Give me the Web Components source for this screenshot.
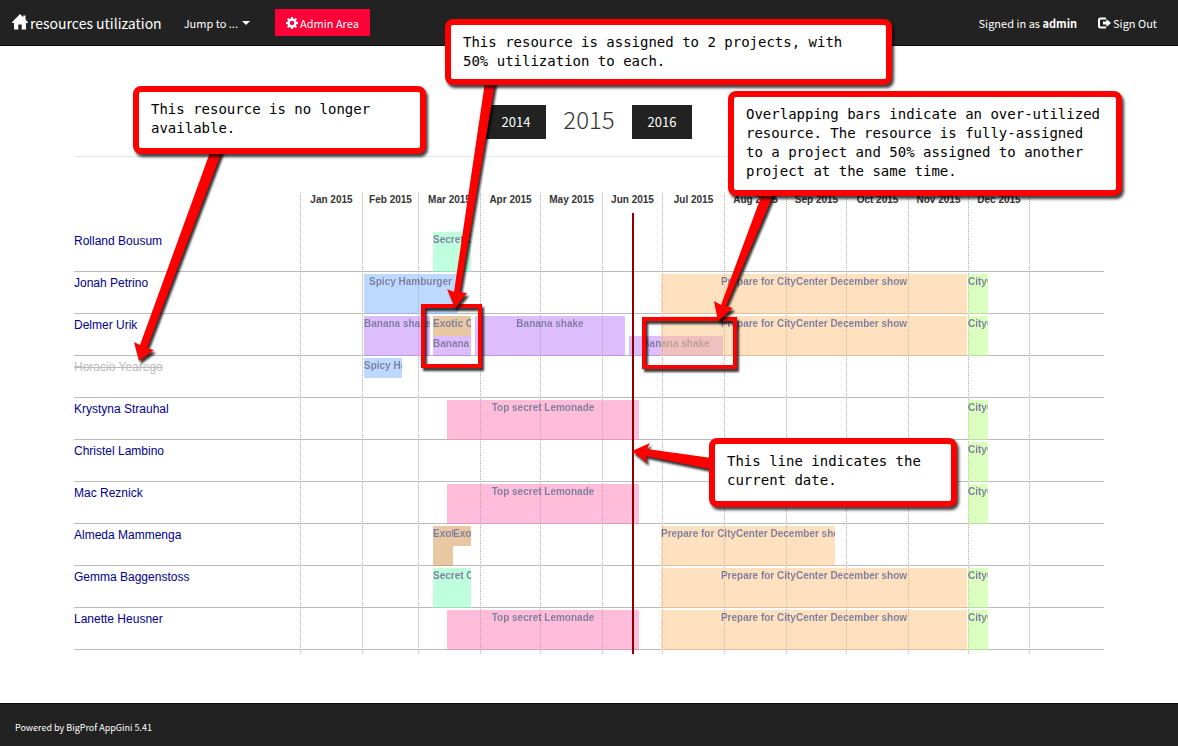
<!DOCTYPE html>
<html lang="en">
<head>
<meta charset="utf-8">
<title>resources utilization</title>
<style>
  body {
    margin: 0;
    min-height: 100vh;
    display: flex;
    flex-direction: column;
    position: relative;
    background: #fff;
    overflow-x: hidden;
    font-family: "Noto Sans CJK SC", "Noto Sans", sans-serif;
    font-size: 11px;
    line-height: 20px;
  }
  main {
    flex: 1;
    box-sizing: border-box;
    width: 100%;
    max-width: 1070px;
    margin: 0 auto;
    padding: 59px 20px 49px;
  }
</style>
</head>
<body>

<app-navbar></app-navbar>
<main>
  <year-pager previous="2014" current="2015" next="2016"></year-pager>
  <gantt-chart></gantt-chart>
</main>
<app-footer>Powered by BigProf AppGini 5.41</app-footer>

<note-layer>
  <note-frame style="--x:421px;--y:304px;--w:61px;--h:64px"></note-frame>
  <note-frame style="--x:642px;--y:317px;--w:95px;--h:52px"></note-frame>
  <note-callout style="--x:133px;--y:86px;--w:293px;--h:68px">This resource is no longer<br>available.</note-callout>
  <note-callout style="--x:445px;--y:19px;--w:447px;--h:66px">This resource is assigned to 2 projects, with<br>50% utilization to each.</note-callout>
  <note-callout style="--x:728px;--y:91px;--w:394px;--h:105px">Overlapping bars indicate an over-utilized<br>resource. The resource is fully-assigned<br>to a project and 50% assigned to another<br>project at the same time.</note-callout>
  <note-callout style="--x:709px;--y:438px;--w:248px;--h:69px">This line indicates the<br>current date.</note-callout>
</note-layer>

<script>
  function define(name, html, setup) {
    const template = document.createElement('template');
    template.innerHTML = html;
    customElements.define(name, class extends HTMLElement {
      connectedCallback() {
        if (this.shadowRoot) return;
        const root = this.attachShadow({ mode: 'open' });
        root.append(template.content.cloneNode(true));
        if (setup) setup(this, root);
      }
    });
  }

  define('app-navbar', `
    <style>
      :host { display: block; background: #222; border-bottom: 1px solid #080808; color: #fff; }
      nav { display: flex; align-items: center; height: 45px; padding: 0 21px 0 12px; white-space: nowrap; }
      a, button { display: flex; align-items: center; color: inherit; text-decoration: none; font: inherit; background: none; border: 0; padding: 0; }
      svg { fill: currentColor; display: block; flex: none; }
      .brand { font-size: 14px; gap: 2px; }
      .brand svg { margin-bottom: 2px; }
      .jump { margin-left: 22px; gap: 4px; }
      .admin { margin-left: 25px; background: #ff0039; height: 27px; padding: 0 11px; gap: 2px; }
      .user { margin-left: auto; }
      .out { margin-left: 21px; gap: 2px; }
    </style>
    <nav>
      <a class="brand" href="#">
        <svg width="16" height="16" viewBox="0 0 16 16"><path d="M8 0 L11.200 3.200 V1.500 H13.500 V5.500 L16 8.200 V9 H14 V15.500 H9.700 V10.500 H6.300 V15.500 H2 V9 H0 V8.200 Z"/></svg>
        resources utilization</a>
      <button class="jump" type="button">Jump to ...
        <svg width="8" height="4" viewBox="0 0 8 4"><path d="M0 0H8L4 4Z"/></svg></button>
      <a class="admin" href="#">
        <svg width="12" height="12" viewBox="0 0 12 12"><path fill-rule="evenodd" d="M5 0H7L7.300 1.700L8.300 2.100L9.700 1.100L10.900 2.300L9.900 3.700L10.300 4.700L12 5V7L10.300 7.300L9.900 8.300L10.900 9.700L9.700 10.900L8.300 9.900L7.300 10.300L7 12H5L4.700 10.300L3.700 9.900L2.300 10.900L1.100 9.700L2.100 8.300L1.700 7.300L0 7V5L1.700 4.700L2.100 3.700L1.100 2.300L2.300 1.100L3.700 2.100L4.700 1.700ZM6 3.800A2.200 2.200 0 1 0 6 8.200A2.200 2.200 0 1 0 6 3.800Z"/></svg>
        Admin Area</a>
      <span class="user">Signed in as <b>admin</b></span>
      <a class="out" href="#">
        <svg width="13" height="12" viewBox="0 0 13 12"><path d="M8 0.500V2.500H3Q2 2.500 2 3.500V8.500Q2 9.500 3 9.500H8V11.500H2.500Q0 11.500 0 9V3Q0 0.500 2.500 0.500ZM8.500 2L13 6L8.500 10V7.500H5V4.500H8.500Z"/></svg>
        Sign Out</a>
    </nav>`);

  define('year-pager', `
    <style>
      :host { display: flex; justify-content: center; align-items: flex-start; height: 34px; padding-bottom: 17px; border-bottom: 1px solid #e5e5e5; }
      a { background: #222; color: #fff; text-decoration: none; font-size: 13px; line-height: 34px; width: 60px; text-align: center; }
      h1 { margin: 0; width: 86px; text-align: center; font-weight: 300; font-size: 24px; line-height: 28px; color: #333; }
    </style>
    <a href="#" class="previous"></a><h1></h1><a href="#" class="next"></a>`,
    (host, root) => {
      root.querySelector('.previous').textContent = host.getAttribute('previous');
      root.querySelector('h1').textContent = host.getAttribute('current');
      root.querySelector('.next').textContent = host.getAttribute('next');
    });

  // One unit of the time scale is half a day, counted from 1 January.
  define('gantt-bar', `
    <style>
      :host { display: block; overflow: hidden; opacity: .5; color: #000040; font: bold 10px/16px "Liberation Sans", Arial, sans-serif; text-align: center; white-space: nowrap; grid-row: 1 / span 2; min-width: 0; }
      :host([half="top"]) { grid-row: 1; }
      :host([half="bottom"]) { grid-row: 2; }
    </style><slot></slot>`,
    host => {
      host.style.gridColumn = (+host.getAttribute('start') + 1) + ' / ' + (+host.getAttribute('end') + 1);
      host.style.background = host.getAttribute('color');
    });

  define('gantt-row', `
    <style>
      :host { display: grid; grid-template-columns: 226px minmax(0, 1fr); height: 42px; box-sizing: border-box;
              background: linear-gradient(#bbb, #bbb) bottom / 100% 1px no-repeat; }
      a { color: #00008b; text-decoration: none; font: 12px/22px "Liberation Sans", Arial, sans-serif; justify-self: start; }
      :host([gone]) a { color: #bbb; text-decoration: line-through; }
      .track { display: grid; grid-template-columns: repeat(804, minmax(0, 1fr)); grid-template-rows: 20px 20px; padding-top: 2px; }
    </style>
    <a href="#"></a><div class="track"><slot></slot></div>`,
    (host, root) => { root.querySelector('a').textContent = host.getAttribute('name'); });

  const ORANGE = ['#ffc380', 'Prepare for CityCenter December show'];
  const GREEN = ['#b7ff7f', 'CityCenter'];
  const PINK = ['#ff7db7', 'Top secret Lemonade'];
  const PURPLE = ['#bf7dff', 'Banana shake'];
  const BLUE = ['#7db5ff', 'Spicy Hamburger'];
  const MINT = ['#7fffbf', 'Secret Cookies'];
  const BROWN = ['#d39349', 'Exotic Coffee'];
  const show = [ORANGE, 361, 667], city = [GREEN, 668, 688], lemonade = [PINK, 147, 339], secret = [MINT, 133, 171];
  const people = [
    ['Rolland Bousum', [secret]],
    ['Jonah Petrino', [[BLUE, 64, 157], show, city]],
    ['Delmer Urik', [[PURPLE, 64, 130], [BROWN, 133, 171, 'top'], [PURPLE, 133, 171, 'bottom'], [PURPLE, 175, 325], [PURPLE, 329, 423, 'bottom'], show, city]],
    ['Horacio Yearego', [[BLUE, 64, 102, 'top']], true],
    ['Krystyna Strauhal', [lemonade, city]],
    ['Christel Lambino', [city]],
    ['Mac Reznick', [lemonade, city]],
    ['Almeda Mammenga', [[BROWN, 133, 153], [BROWN, 153, 171, 'top'], [ORANGE, 361, 535]]],
    ['Gemma Baggenstoss', [secret, show, city]],
    ['Lanette Heusner', [lemonade, show, city]]
  ];

  define('gantt-chart', `
    <style>
      :host { display: grid; margin-top: 36px; }
      .scale, .body, .now { grid-area: 1 / 1; }
      .scale, .now { margin-left: 226px; display: grid; }
      .scale { grid-template-columns: 62fr 56fr 62fr 60fr 62fr 60fr 62fr 62fr 60fr 62fr 60fr 61fr 75fr; }
      .scale span { border-left: 1px dotted #b0b0b0; text-align: center; color: #333; font: bold 10px/14px "Liberation Sans", Arial, sans-serif; white-space: nowrap; }
      .body { padding: 37px 0 4px; position: relative; }
      .now { grid-template-columns: 332fr 2px 470fr; padding-top: 20px; position: relative; pointer-events: none; }
      .now i { grid-column: 2; background: #8b0000; }
    </style>
    <div class="scale"></div><div class="body"></div><div class="now"><i></i></div>`,
    (host, root) => {
      const scale = root.querySelector('.scale');
      for (const month of ['Jan', 'Feb', 'Mar', 'Apr', 'May', 'Jun', 'Jul', 'Aug', 'Sep', 'Oct', 'Nov', 'Dec']) {
        const label = document.createElement('span');
        label.textContent = month + ' 2015';
        scale.append(label);
      }
      scale.append(document.createElement('span'));
      const body = root.querySelector('.body');
      for (const [name, bars, gone] of people) {
        const row = document.createElement('gantt-row');
        row.setAttribute('name', name);
        if (gone) row.setAttribute('gone', '');
        for (const [[color, text], start, end, half] of bars) {
          const bar = document.createElement('gantt-bar');
          bar.setAttribute('color', color);
          bar.setAttribute('start', start);
          bar.setAttribute('end', end);
          if (half) bar.setAttribute('half', half);
          bar.textContent = text;
          row.append(bar);
        }
        body.append(row);
      }
    });

  define('app-footer', `
    <style>
      :host { display: block; background: #222; border-top: 1px solid #080808; color: #fff; font-size: 9px; line-height: 20px; padding: 14px 15px 8px; }
    </style><slot></slot>`);

  // Notes lie over the page, measured from its centre line.
  define('note-layer', `
    <style>
      :host { position: absolute; top: 0; left: calc(50% - 589px); pointer-events: none; }
      svg { position: absolute; top: 0; left: 0; overflow: visible; fill: #f00; filter: drop-shadow(2px 3px 1px rgba(0,0,0,.8)); }
    </style>
    <slot></slot>
    <svg width="1" height="1">
      <path d="M213 144L140 345L134 342L139 361L154 350L147 348L224 146Z"/>
      <path d="M486 75L454 292L447 289L455 308L467 293L460 292L496 77Z"/>
      <path d="M765 186L721 305L714 301L718 321L733 308L726 306L777 186Z"/>
      <path d="M719 459L647 449L650 443L632 451L647 463L646 456L719 471Z"/>
    </svg>`);

  define('note-frame', `
    <style>
      :host { position: absolute; left: var(--x); top: var(--y); width: var(--w); height: var(--h); box-sizing: border-box; border: 4px solid #f00; filter: drop-shadow(2px 3px 1px rgba(0,0,0,.8)); }
    </style>`);

  define('note-callout', `
    <style>
      :host { position: absolute; z-index: 1; left: var(--x); top: var(--y); width: var(--w); min-height: var(--h); box-sizing: border-box; padding: 8px 12px; border: 6px solid #f00; border-radius: 8px; background: #fff; box-shadow: 2px 3px 3px rgba(0,0,0,.75); color: #000; font: 14px/19px "DejaVu Sans Mono", monospace; white-space: nowrap; }
    </style><slot></slot>`);
</script>
</body>
</html>
